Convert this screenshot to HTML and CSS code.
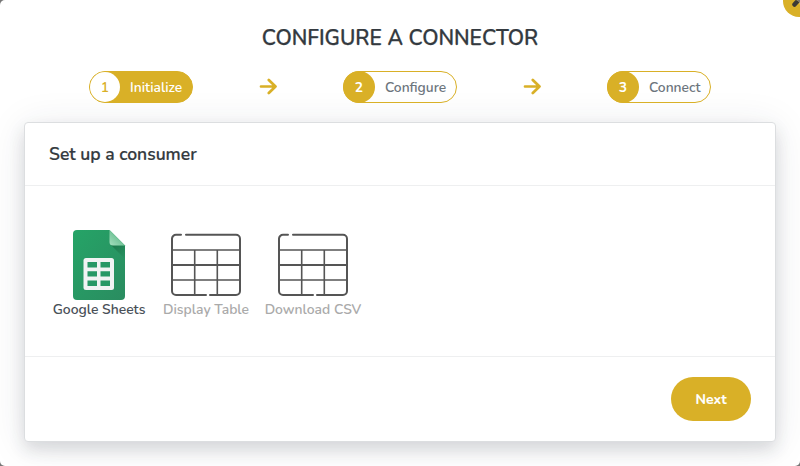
FILE: index.html
```
<!DOCTYPE html>
<html lang="en">
<head>
<meta charset="utf-8">
<title>Configure a connector</title>
<link rel="stylesheet" href="styles.css">
</head>
<body>
<main class="modal">
  <button class="close" aria-label="Close"><svg viewBox="0 0 32 32"><path d="M11.500 8L22 19.500M22 8L11.500 19.500"/></svg></button>
  <h1 class="title">CONFIGURE A CONNECTOR</h1>
  <nav class="steps">
    <div class="step active"><span class="number">1</span><span>Initialize</span></div>
    <svg class="arrow" viewBox="0 0 18 18"><path d="M2 8.500H16.500M9.800 2L16.500 8.500L9.800 15"/></svg>
    <div class="step wide"><span class="number">2</span><span>Configure</span></div>
    <svg class="arrow" viewBox="0 0 18 18"><path d="M2 8.500H16.500M9.800 2L16.500 8.500L9.800 15"/></svg>
    <div class="step"><span class="number">3</span><span>Connect</span></div>
  </nav>
  <section class="card">
    <header class="card-header"><h2>Set up a consumer</h2></header>
    <div class="card-body">
      <div class="option selected">
        <svg class="icon" viewBox="0 0 72 72">
          <defs>
            <linearGradient id="sheet" x1="0" y1="0" x2="1" y2="1"><stop offset="0" stop-color="#25a467"/><stop offset="1" stop-color="#2a8c60"/></linearGradient>
            <linearGradient id="fold" x1="0" y1="1" x2="1" y2="0"><stop offset="0" stop-color="#a5dfbe"/><stop offset="1" stop-color="#45aa76"/></linearGradient>
            <linearGradient id="shade" x1="0" y1="0" x2="1" y2="1"><stop offset="0" stop-color="#1c7549"/><stop offset="1" stop-color="#1c7549" stop-opacity="0"/></linearGradient>
          </defs>
          <path fill="url(#sheet)" d="M14 1H46.500L62 16.500V67a4 4 0 0 1-4 4H14a4 4 0 0 1-4-4V5a4 4 0 0 1 4-4Z"/>
          <path fill="url(#shade)" d="M47.500 15.500L62 30V16.500Z"/>
          <path fill="url(#fold)" d="M46.500 1L62 16.500H50a3.500 3.500 0 0 1-3.500-3.500Z"/>
          <rect x="20.500" y="29" width="30.500" height="32" rx="2.500" fill="#f1f3f3"/>
          <path fill="#279865" d="M24.500 33h9.500v5.500h-9.500ZM37.500 33h9.500v5.500h-9.500ZM24.500 42.300h9.500v5.300h-9.500ZM37.500 42.300h9.500v5.300h-9.500ZM24.500 51.500h9.500V57h-9.500ZM37.500 51.500h9.500V57h-9.500Z"/>
        </svg>
        <span class="label">Google Sheets</span>
      </div>
      <div class="option display-option">
        <svg class="icon table" viewBox="0 0 72 72"><path d="M11 5.800H6a4 4 0 0 0-4 4V62a4 4 0 0 0 4 4H36M40 66H66a4 4 0 0 0 4-4V9.800a4 4 0 0 0-4-4H16"/><path class="grid-line" d="M2 21H70M2 51H70M24.700 21V66M47.300 21V66"/><path d="M2 36H70"/></svg>
        <span class="label">Display Table</span>
      </div>
      <div class="option">
        <svg class="icon table" viewBox="0 0 72 72"><path d="M11 5.800H6a4 4 0 0 0-4 4V62a4 4 0 0 0 4 4H36M40 66H66a4 4 0 0 0 4-4V9.800a4 4 0 0 0-4-4H16"/><path class="grid-line" d="M2 21H70M2 51H70M24.700 21V66M47.300 21V66"/><path d="M2 36H70"/></svg>
        <span class="label">Download CSV</span>
      </div>
    </div>
    <footer class="card-footer"><button class="next">Next</button></footer>
  </section>
</main>
</body>
</html>
```
FILE: styles.css
```
* { box-sizing: border-box; }
body { margin: 0; background: #777; font-family: Nunito, Lato, sans-serif; color: #343a40; }
.modal { position: relative; height: 466px; padding: 22px 24px 24px; background: #fff; border-radius: 5px; overflow: hidden; }
.close { position: absolute; top: -15px; right: -15px; width: 32px; height: 32px; padding: 0; border: 0; border-radius: 50%; background: #d9b027; }
.close svg { display: block; width: 32px; height: 32px; fill: none; stroke: #3b3935; stroke-width: 4.5; stroke-linecap: round; }
.title { margin: 0; height: 32px; line-height: 32px; text-align: center; font-size: 21px; font-weight: 600; white-space: nowrap; -webkit-text-stroke: .25px currentColor; }
.steps { display: flex; align-items: center; justify-content: space-between; height: 32px; margin: 17px 65px 19px; }
.step { display: flex; align-items: center; width: 104px; height: 32px; border: 1px solid #d9b027; border-radius: 16px; color: #6c757d; font-size: 13.8px; font-weight: 600; }
.step.wide { width: 114px; }
.number { width: 32px; height: 32px; margin: -1px 10px -1px -1px; border-radius: 50%; background: #d9b027; color: #fff; text-align: center; line-height: 33px; font-weight: 700; }
.active { background: #d9b027; color: #fff; }
.active .number { width: 30px; height: 30px; margin: 0 10px 0 0; background: #fff; color: #d9b027; line-height: 31px; font-weight: 600; }
.arrow { width: 18px; height: 18px; fill: none; stroke: #d9b027; stroke-width: 2.7; stroke-linecap: round; stroke-linejoin: round; }
.card { height: 320px; width: 752px; background: #fff; border: 1px solid #dcdee0; border-radius: 4px; box-shadow: 0 8px 16px rgba(40,50,65,.14), 0 4px 38px rgba(40,50,65,.1); }
.card-header { height: 63px; padding: 0 24px; border-bottom: 1px solid #eeeff0; }
.card-header h2 { margin: 0; line-height: 63px; font-size: 17.5px; font-weight: 600; white-space: nowrap; -webkit-text-stroke: .2px currentColor; }
.card-body { display: flex; height: 171px; padding: 43px 25px 0; border-bottom: 1px solid #eeeff0; }
.option { display: flex; flex-direction: column; align-items: center; width: 98px; color: #aaa; }
.display-option { width: 116px; }
.selected { color: #495057; }
.icon { width: 72px; height: 72px; flex: none; }
.table { fill: none; stroke: #555; stroke-width: 2; stroke-linecap: round; }
.grid-line { stroke-width: 1.6; }
.label { line-height: 18px; font-size: 13.9px; font-weight: 600; white-space: nowrap; }
.card-footer { display: flex; justify-content: flex-end; padding: 20px 24px; }
.next { width: 80px; height: 44px; padding: 0; border: 0; border-radius: 22px; background: #d9b027; color: #fff; font: 700 14px Nunito, Lato, sans-serif; -webkit-text-stroke: .15px currentColor; }
```
